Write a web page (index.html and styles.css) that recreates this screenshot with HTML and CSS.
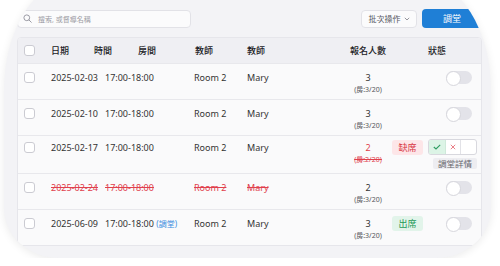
FILE: index.html
```html
<!DOCTYPE html>
<html lang="zh-Hant">

<head>
  <meta charset="UTF-8">
  <meta name="viewport" content="width=device-width, initial-scale=1.0">
  <title>課堂列表</title>
  <link rel="stylesheet" href="styles.css">
</head>

<body>
  <div class="screen">
    <div class="toolbar">
      <div class="search">
        <svg class="search-icon" width="9" height="9" viewBox="0 0 10 10">
          <circle cx="4.2" cy="4.2" r="3.2" fill="none" stroke="#9a9aa3" stroke-width="1.1" />
          <line x1="6.6" y1="6.6" x2="9.2" y2="9.2" stroke="#9a9aa3" stroke-width="1.1" stroke-linecap="round" />
        </svg>
        <span class="placeholder">搜索, 或督導名稱</span>
      </div>
      <div class="spacer"></div>
      <button class="btn-batch">批次操作
        <svg width="6" height="4" viewBox="0 0 6 4">
          <polyline points="0.8,0.8 3,3 5.2,0.8" fill="none" stroke="#8a8a93" stroke-width="0.9" />
        </svg>
      </button>
      <button class="btn-primary">調堂</button>
    </div>

    <div class="table">
      <div class="thead">
        <span class="check"></span>
        <span>日期</span>
        <span>時間</span>
        <span>房間</span>
        <span>教師</span>
        <span>教師</span>
        <span class="count">報名人數</span>
        <span class="th-status">狀態</span>
      </div>

      <div class="row">
        <span class="check"></span>
        <span>2025-02-03</span>
        <span>17:00-18:00</span>
        <span>Room 2</span>
        <span>Mary</span>
        <div class="count">3<small>(房:3/20)</small></div>
        <div class="status">
          <span class="badge-slot"></span>
          <span class="switch"></span>
        </div>
      </div>

      <div class="row">
        <span class="check"></span>
        <span>2025-02-10</span>
        <span>17:00-18:00</span>
        <span>Room 2</span>
        <span>Mary</span>
        <div class="count">3<small>(房:3/20)</small></div>
        <div class="status">
          <span class="badge-slot"></span>
          <span class="switch"></span>
        </div>
      </div>

      <div class="row row-tall">
        <span class="check"></span>
        <span>2025-02-17</span>
        <span>17:00-18:00</span>
        <span>Room 2</span>
        <span>Mary</span>
        <div class="count red">2<small class="strike">(房:2/20)</small></div>
        <div class="status">
          <span class="badge badge-absent">缺席</span>
          <div class="mark">
            <div class="seg">
              <span class="seg-ok">
                <svg width="8" height="6" viewBox="0 0 8 6">
                  <polyline points="0.8,3 3,5 7.2,0.8" fill="none" stroke="#2f9e62" stroke-width="1.1" />
                </svg>
              </span>
              <span class="seg-no">
                <svg width="6" height="6" viewBox="0 0 6 6">
                  <path d="M0.8 0.8 L5.2 5.2 M5.2 0.8 L0.8 5.2" stroke="#e8727b" stroke-width="0.9" />
                </svg>
              </span>
              <span class="seg-empty"></span>
            </div>
            <span class="detail">調堂詳情</span>
          </div>
        </div>
      </div>

      <div class="row cancelled">
        <span class="check"></span>
        <span class="strike">2025-02-24</span>
        <span class="strike">17:00-18:00</span>
        <span class="strike">Room 2</span>
        <span class="strike">Mary</span>
        <div class="count">2<small>(房:3/20)</small></div>
        <div class="status">
          <span class="badge-slot"></span>
          <span class="switch"></span>
        </div>
      </div>

      <div class="row">
        <span class="check"></span>
        <span>2025-06-09</span>
        <span>17:00-18:00 <a class="moved" href="#">(調堂)</a></span>
        <span>Room 2</span>
        <span>Mary</span>
        <div class="count">3<small>(房:3/20)</small></div>
        <div class="status">
          <span class="badge badge-present">出席</span>
          <span class="switch"></span>
        </div>
      </div>
    </div>
  </div>
</body>

</html>
```

FILE: styles.css
```css
* {
  box-sizing: border-box;
  margin: 0;
  padding: 0;
  font-family: "Noto Sans", "Noto Sans CJK TC", sans-serif;
}

body {
  background-color: #ffffff;
  color: #333333;
  overflow: hidden;
}

.screen {
  width: 487px;
  height: 278px;
  margin: -20px 9px 0 4px;
  padding: 29px 9px 0 13px;
  background-color: #f3f3f6;
  border-radius: 70px 70px 55px 55px / 110px 110px 50px 50px;
  box-shadow: 0 2px 8px rgba(0, 0, 0, 0.08);
  overflow: hidden;
}

/* toolbar */

.toolbar {
  display: flex;
  align-items: center;
  gap: 5px;
  height: 19px;
}

.spacer {
  flex: 1;
}

.search {
  width: 174px;
  height: 18px;
  display: flex;
  align-items: center;
  gap: 6px;
  padding-left: 5px;
  background-color: #fbfbfc;
  border: 1px solid #e2e2e7;
  border-radius: 4px;
}

.placeholder {
  font-size: 7px;
  color: #9c9ca4;
}

.btn-batch {
  width: 56px;
  height: 18px;
  display: flex;
  align-items: center;
  justify-content: center;
  gap: 3px;
  font-size: 8px;
  color: #55555c;
  background-color: #fbfbfc;
  border: 1px solid #e2e2e7;
  border-radius: 4px;
}

.btn-primary {
  width: 60px;
  height: 19px;
  font-size: 9px;
  color: #ffffff;
  background-color: #1f7fd6;
  border: none;
  border-radius: 4px;
}

/* table */

.table {
  margin-top: 9px;
  background-color: #fafafb;
  border: 1px solid #e6e6eb;
  border-radius: 4px;
  overflow: hidden;
}

.thead,
.row {
  display: grid;
  padding-left: 6px;
  font-size: 9px;
}

.thead {
  grid-template-columns: 27px 43px 44px 57px 52px 97px 48px 1fr;
  align-items: center;
  height: 25px;
  background-color: #efeff3;
  color: #222226;
  font-weight: 500;
}

.th-status {
  padding-left: 36px;
}

.row {
  grid-template-columns: 27px 54px 89px 53px 97px 48px 1fr;
  align-items: start;
  padding-top: 6px;
  padding-bottom: 5px;
  line-height: 15px;
  border-top: 1px solid #e8e8ec;
}

.row-tall {
  padding-top: 4px;
  padding-bottom: 4px;
}

.check {
  display: block;
  width: 11px;
  height: 11px;
  margin-top: 2px;
  background-color: #ffffff;
  border: 1px solid #cbcbd2;
  border-radius: 3px;
}

.thead .check {
  margin-top: 0;
}

.count {
  text-align: center;
}

.count small {
  display: block;
  font-size: 7px;
  line-height: 9px;
  color: #555559;
}

.red,
.count.red small {
  color: #e0404c;
}

.strike {
  text-decoration: line-through;
}

.cancelled > .strike {
  color: #e0404c;
}

.moved {
  font-size: 8px;
  color: #3a8ee0;
  text-decoration: none;
}

/* status */

.status {
  display: flex;
  align-items: flex-start;
}

.badge-slot {
  width: 31px;
}

.badge {
  width: 31px;
  height: 15px;
  font-size: 9px;
  line-height: 15px;
  text-align: center;
  border-radius: 3px;
}

.badge-absent {
  background-color: #fde6e8;
  color: #d8343f;
}

.badge-present {
  background-color: #e2f4ea;
  color: #1e9a58;
}

.switch {
  position: relative;
  width: 26px;
  height: 13px;
  margin-top: 1px;
  margin-left: 23px;
  background-color: #e3e3e9;
  border-radius: 7px;
}

.switch::after {
  content: "";
  position: absolute;
  left: 0;
  top: 0;
  width: 13px;
  height: 13px;
  background-color: #ffffff;
  border: 1px solid #d6d6dc;
  border-radius: 50%;
}

.mark {
  display: flex;
  flex-direction: column;
  margin-left: 5px;
  gap: 3px;
}

.seg {
  display: flex;
  width: 49px;
  height: 16px;
  margin-top: -1px;
  background-color: #ffffff;
  border: 1px solid #d8d8de;
  border-radius: 3px;
  overflow: hidden;
}

.seg span {
  display: flex;
  align-items: center;
  justify-content: center;
}

.seg-ok {
  width: 17px;
  background-color: #dcf4e6;
  border-right: 1px solid #cfe9da;
}

.seg-no {
  width: 15px;
  border-right: 1px solid #e2e2e7;
}

.seg-empty {
  flex: 1;
}

.detail {
  width: 44px;
  height: 11px;
  margin-left: 5px;
  font-size: 8.5px;
  line-height: 11px;
  text-align: center;
  color: #66666d;
  background-color: #ededf1;
  border-radius: 2px;
}
```
